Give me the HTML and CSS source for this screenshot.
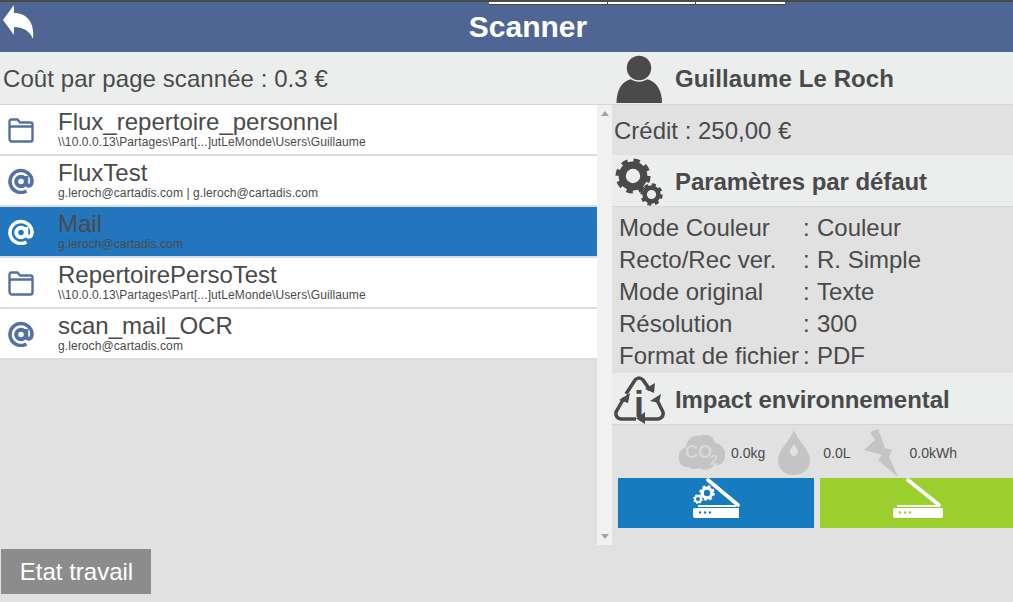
FILE: index.html
```html
<!DOCTYPE html>
<html lang="fr">
<head>
  <meta charset="UTF-8">
  <meta name="viewport" content="width=device-width, initial-scale=1.0">
  <title>Scanner</title>
  <link rel="stylesheet" href="styles.css">
</head>
<body>

  <svg class="defs" xmlns="http://www.w3.org/2000/svg">
    <symbol id="i-folder" viewBox="0 0 26 26">
      <path d="M1.500 21V4.500Q1.500 2.500 3.500 2.500H9.500L12 5.500H22.500Q24.500 5.500 24.500 7.500V22.500Q24.500 24.500 22.500 24.500H4Q1.500 24.500 1.500 21ZM1.500 21V12Q1.500 9.500 4 9.500H24.500" fill="none" stroke="currentColor" stroke-width="2.400"/>
    </symbol>
    <symbol id="i-at" viewBox="0 0 26 26">
      <circle cx="13" cy="13.500" r="4.800" fill="none" stroke="currentColor" stroke-width="4"/>
      <path d="M18.500 8V15Q18.500 18 21 18Q23.800 17.500 24 13A11 11 0 1 0 18.500 23" fill="none" stroke="currentColor" stroke-width="3.600"/>
    </symbol>
    <symbol id="i-gear" viewBox="0 0 40 40">
      <circle cx="20" cy="20" r="12" fill="none" stroke="currentColor" stroke-width="8"/>
      <circle cx="20" cy="20" r="16" fill="none" stroke="currentColor" stroke-width="7" stroke-dasharray="6.560 6.010"/>
    </symbol>
  </svg>

  <header class="topbar">
    <div class="strip"><span></span><span></span><span></span></div>
    <a class="back" href="#">
      <svg width="36" height="42" viewBox="0 0 36 42"><path d="M3 18L14 3V11C27 11 35 21 33 37C30 29 23 25 14 25V33Z" fill="#fff"/></svg>
    </a>
    <h1>Scanner</h1>
  </header>

  <main class="page">
    <section class="left">
      <div class="cost">Coût par page scannée : 0.3 €</div>

      <div class="list-wrap">
        <ul class="list">
          <li class="item">
            <svg class="item-icon"><use href="#i-folder"/></svg>
            <div><div class="name">Flux_repertoire_personnel</div><div class="sub">\\10.0.0.13\Partages\Part[...]utLeMonde\Users\Guillaume</div></div>
          </li>
          <li class="item">
            <svg class="item-icon"><use href="#i-at"/></svg>
            <div><div class="name">FluxTest</div><div class="sub">g.leroch@cartadis.com | g.leroch@cartadis.com</div></div>
          </li>
          <li class="item selected">
            <svg class="item-icon"><use href="#i-at"/></svg>
            <div><div class="name">Mail</div><div class="sub">g.leroch@cartadis.com</div></div>
          </li>
          <li class="item">
            <svg class="item-icon"><use href="#i-folder"/></svg>
            <div><div class="name">RepertoirePersoTest</div><div class="sub">\\10.0.0.13\Partages\Part[...]utLeMonde\Users\Guillaume</div></div>
          </li>
          <li class="item">
            <svg class="item-icon"><use href="#i-at"/></svg>
            <div><div class="name">scan_mail_OCR</div><div class="sub">g.leroch@cartadis.com</div></div>
          </li>
        </ul>
        <div class="scrollbar">
          <span class="arrow-up"></span>
          <span class="arrow-down"></span>
        </div>
      </div>

      <button class="btn-etat">Etat travail</button>
    </section>

    <section class="right">
      <div class="head user-head">
        <svg class="head-icon" width="52" height="50" viewBox="0 0 52 50">
          <path d="M3.500 50C3.500 38 8 28 19 26H33C44 28 49 38 49 50Z" fill="#4a4a4a"/>
          <circle cx="26" cy="15" r="13" fill="#4a4a4a" stroke="#eceeed" stroke-width="1.500"/>
        </svg>
        <span>Guillaume Le Roch</span>
      </div>
      <div class="credit">Crédit : 250,00 €</div>

      <div class="head">
        <svg class="head-icon" width="52" height="50" viewBox="0 0 52 50">
          <use href="#i-gear" x="2" y="2" width="36" height="36" color="#4a4a4a"/>
          <use href="#i-gear" x="27" y="27" width="23" height="23" color="#4a4a4a"/>
        </svg>
        <span>Paramètres par défaut</span>
      </div>
      <div class="params">
        <span>Mode Couleur</span><span>:</span><span>Couleur</span>
        <span>Recto/Rec ver.</span><span>:</span><span>R. Simple</span>
        <span>Mode original</span><span>:</span><span>Texte</span>
        <span>Résolution</span><span>:</span><span>300</span>
        <span>Format de fichier</span><span>:</span><span>PDF</span>
      </div>

      <div class="head">
        <svg class="head-icon" width="52" height="50" viewBox="0 0 52 50">
          <g fill="none" stroke="#4a4a4a" stroke-width="3.500">
            <path d="M13 20L22 6Q26 2 30 6L37 16"/>
            <path d="M11 24L3 38Q2 44 8 45H23"/>
            <path d="M30 45H45Q51 44 50 38L43 24"/>
          </g>
          <path d="M32 15L41 19L42 9ZM6 26L15 29L17 19ZM32 38V50L23 44.500ZM37 27L46 29L48 20Z" fill="#4a4a4a"/>
          <text class="icon-i" x="26" y="43" text-anchor="middle">i</text>
        </svg>
        <span>Impact environnemental</span>
      </div>

      <div class="stats">
        <svg class="stat-cloud" width="48" height="38" viewBox="0 0 48 38">
          <path d="M10 34C3 34 0 29 1 23C1 18 5 15 8 14C9 7 14 2 22 3C28 0 36 3 37 10C43 11 48 16 47 23C47 30 41 33 36 32C33 37 26 38 21 35C17 37 13 36 10 34Z" fill="#c4c4c4"/>
          <text class="icon-co" x="7" y="25">CO</text>
          <text class="icon-two" x="32" y="32">2</text>
        </svg>
        <span class="stat-val kg">0.0kg</span>
        <svg class="stat-drop" width="32" height="46" viewBox="0 0 32 46">
          <path fill-rule="evenodd" d="M16 0C20 11 32 20 32 30C32 39 25 45 16 45C7 45 0 39 0 30C0 20 12 11 16 0ZM16 14C14 18 12 19 12 22C12 24 14 26 16 26C18 26 20 24 20 22C20 19 18 18 16 14Z" fill="#c4c4c4"/>
        </svg>
        <span class="stat-val l">0.0L</span>
        <svg class="stat-bolt" width="36" height="49" viewBox="0 0 36 49">
          <path d="M6 3L14 0L21 19L28 21L25 28L34 48L14 31L18 26L0 21L11 11Z" fill="#c4c4c4"/>
        </svg>
        <span class="stat-val kwh">0.0kWh</span>
      </div>

      <div class="actions">
        <button class="action blue">
          <svg class="scan-icon" width="52" height="42" viewBox="0 0 52 42">
            <path d="M16 2L46 27" fill="none" stroke="#fff" stroke-width="3.600" stroke-linecap="round"/>
            <use href="#i-gear" x="7" y="7" width="16" height="16" color="#fff"/>
            <use href="#i-gear" x="1" y="16" width="10" height="10" color="#fff"/>
            <path d="M6 27H44V29H6Z" fill="#fff"/>
            <path d="M3 30H47V40H3Q1 40 1 38V32Q1 30 3 30Z" fill="#fff"/>
            <g fill="#177bc0"><circle cx="8" cy="34.500" r="1.200"/><circle cx="13" cy="34.500" r="1.200"/><circle cx="18" cy="34.500" r="1.200"/></g>
          </svg>
        </button>
        <button class="action green">
          <svg class="scan-icon" width="52" height="42" viewBox="0 0 52 42">
            <path d="M16 2L47 27" fill="none" stroke="#fff" stroke-width="3.600" stroke-linecap="round"/>
            <path d="M5 27H46V29H5Z" fill="#fff"/>
            <path d="M3 30H49Q51 30 51 32V38Q51 40 49 40H3Q1 40 1 38V32Q1 30 3 30Z" fill="#fff"/>
            <g fill="#9bcf2e"><circle cx="8" cy="34.500" r="1.200"/><circle cx="13" cy="34.500" r="1.200"/><circle cx="18" cy="34.500" r="1.200"/></g>
          </svg>
        </button>
      </div>
    </section>
  </main>

</body>
</html>
```

FILE: styles.css
```css
* {
  box-sizing: border-box;
}

html, body {
  height: 100%;
}

body {
  margin: 0;
  font-family: "Liberation Sans", Arial, sans-serif;
  background: #e1e1e1;
  color: #4a4a4a;
  overflow: hidden;
}

.defs {
  display: none;
}

/* top bar */
.topbar {
  position: relative;
  display: flex;
  align-items: center;
  height: 52px;
  background: #4f6694;
  border-top: 2px solid #4a4a4a;
}

.strip {
  position: absolute;
  top: 0;
  left: 489px;
  display: flex;
  width: 296px;
  height: 3px;
  background: #fff;
  border-bottom: 1px solid #4a4a4a;
}

.strip span {
  width: 89px;
  border-right: 1px solid #4a4a4a;
}

.strip span:first-child {
  width: 119px;
}

.strip span:last-child {
  border-right: none;
}

.back {
  display: block;
  width: 43px;
  height: 50px;
}

.back svg {
  display: block;
}

.topbar h1 {
  flex: 1;
  margin: 0;
  color: #fff;
  font-size: 30px;
  font-weight: bold;
  text-align: center;
}

/* layout */
.page {
  display: flex;
  height: 550px;
}

.left {
  width: 612px;
  flex-shrink: 0;
}

.right {
  flex: 1;
}

/* left column */
.cost {
  height: 53px;
  padding: 0 3px;
  background: #eceeed;
  border-bottom: 1px solid #d6d6d6;
  font-size: 24px;
  letter-spacing: 0.07px;
  line-height: 54px;
}

.list-wrap {
  display: flex;
  height: 440px;
}

.list {
  flex: 1;
  margin: 0;
  padding: 0;
  list-style: none;
}

.item {
  display: flex;
  align-items: center;
  height: 51px;
  padding-bottom: 2px;
  background: #fff;
  border-bottom: 2px solid #dcdcdc;
}

.item-icon {
  width: 26px;
  height: 26px;
  margin: 3px 24px 0 8px;
  color: #5470a5;
  flex-shrink: 0;
}

.name {
  font-size: 24px;
  line-height: 26px;
}

.sub {
  padding-top: 1px;
  font-size: 12px;
  letter-spacing: 0.1px;
  line-height: 13px;
}

.selected {
  background: #2176bd;
  background-clip: padding-box;
}

.selected .item-icon {
  color: #fff;
}

.scrollbar {
  display: flex;
  flex-direction: column;
  justify-content: space-between;
  align-items: center;
  width: 15px;
  padding: 6px 0;
  background: #f1f1f1;
}

.arrow-up {
  border: 4px solid transparent;
  border-top: none;
  border-bottom: 5px solid #a3a3a3;
}

.arrow-down {
  border: 4px solid transparent;
  border-bottom: none;
  border-top: 5px solid #a3a3a3;
}

.btn-etat {
  display: block;
  width: 150px;
  height: 45px;
  margin: 4px 0 0 1px;
  padding: 0 0 0 1px;
  border: none;
  background: #8c8c8c;
  color: #fff;
  font-family: inherit;
  font-size: 24px;
}

/* right column */
.head {
  display: flex;
  align-items: center;
  height: 52px;
  background: #eceeed;
  border-bottom: 1px solid #d6d6d6;
  font-size: 24px;
  font-weight: bold;
}

.head span {
  padding-top: 2px;
  letter-spacing: -0.07px;
}

.user-head {
  height: 53px;
}

.user-head span {
  letter-spacing: 0.1px;
}

.head-icon {
  flex-shrink: 0;
  margin: 0 10px 0 1px;
}

.credit {
  height: 50px;
  padding-left: 2px;
  font-size: 24px;
  line-height: 51px;
}

.params {
  display: grid;
  grid-template-columns: 184px 14px 1fr;
  grid-auto-rows: 32px;
  align-items: center;
  height: 166px;
  padding: 5px 0 0 7px;
  font-size: 24px;
  white-space: nowrap;
}

.icon-i {
  font: bold 36px "Liberation Sans", sans-serif;
  fill: #4a4a4a;
}

.icon-co {
  font: bold 18px "Liberation Sans", sans-serif;
  fill: #d8d8d8;
}

.icon-two {
  font: bold 14px "Liberation Sans", sans-serif;
  fill: #d8d8d8;
}

/* stats row */
.stats {
  display: flex;
  align-items: center;
  height: 53px;
  padding-left: 66px;
}

.stat-val {
  margin-top: 2px;
  font-size: 14px;
}

.kg { margin: 2px 13px 0 5px; }
.l { margin: 2px 13px 0; }
.kwh { margin: 2px 0 0 10px; }

.stat-drop { margin-top: 2px; }
.stat-bolt { margin-top: 3px; }

/* scan buttons */
.actions {
  display: flex;
  gap: 6px;
  padding-left: 6px;
}

.action {
  display: flex;
  justify-content: center;
  align-items: flex-start;
  height: 50px;
  padding: 0 0 0 3px;
  border: none;
}

.blue {
  width: 196px;
  background: #177bc0;
}

.green {
  flex: 1;
  background: #9bcf2e;
}

.scan-icon {
  display: block;
}
```
